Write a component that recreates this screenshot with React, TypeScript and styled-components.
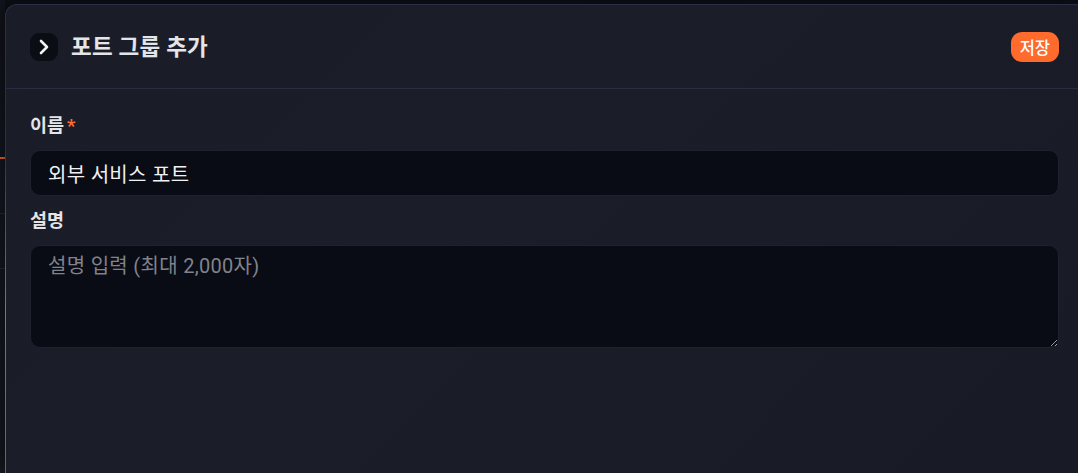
import React from "react";
import styled, { createGlobalStyle } from "styled-components";

const GlobalStyle = createGlobalStyle`
  html, body {
    margin: 0;
    padding: 0;
    background: #0d0f16;
    overflow: hidden;
  }
  body {
    font-family: Roboto, "Noto Sans CJK KR", sans-serif;
  }
`;

const Screen = styled.div`
  display: flex;
  width: 1078px;
  height: 473px;
  overflow: hidden;
`;

// strip of the page that stays visible left of the drawer
const PageEdge = styled.div`
  flex: 0 0 5px;
  background:
    linear-gradient(#13151d, #13151d) 0 0 / 100% 19px no-repeat,
    linear-gradient(#ff6b2c, #ff6b2c) 0 157px / 100% 2px no-repeat,
    linear-gradient(#2a2d38, #2a2d38) 0 213px / 100% 1px no-repeat,
    linear-gradient(#2a2d38, #2a2d38) 0 268px / 100% 1px no-repeat,
    linear-gradient(180deg, #12141c 0%, #161925 40%, #171a22 100%);
`;

const Drawer = styled.aside`
  position: relative;
  flex: 0 0 1078px;
  margin-top: 4px;
  box-sizing: border-box;
  border: 1px solid #2a2e48;
  border-right: none;
  border-bottom: none;
  border-radius: 12px 0 0 0;
  background: linear-gradient(135deg, #1a1d28 0%, #1b1e29 45%, #181b25 100%);
  box-shadow: -6px 0 18px rgba(0, 0, 0, 0.45);

  &::before {
    content: "";
    position: absolute;
    left: -1px;
    top: 140px;
    bottom: 0;
    width: 1px;
    background: linear-gradient(180deg, rgba(255, 107, 44, 0) 0%, rgba(255, 107, 44, 0.75) 50%, rgba(255, 107, 44, 0.55) 100%);
  }
`;

const Header = styled.header`
  display: flex;
  align-items: center;
  justify-content: space-between;
  height: 83px;
  padding: 0 24px;
  border-bottom: 1px solid #282c45;
`;

const TitleGroup = styled.div`
  display: flex;
  align-items: center;
  gap: 13px;
`;

const IconButton = styled.button`
  display: flex;
  align-items: center;
  justify-content: center;
  width: 28px;
  height: 28px;
  padding: 0;
  border: none;
  border-radius: 9px;
  background: #0b0d14;
  color: #f2f2f2;
`;

const Title = styled.h2`
  margin: 0;
  font-size: 22.5px;
  font-weight: 700;
  line-height: 30px;
  letter-spacing: 0.2px;
  color: #e4e5e8;
`;

const SaveButton = styled.button`
  height: 30px;
  padding: 0 9px;
  border: none;
  border-radius: 11px;
  background: #ff6b2c;
  color: #fff;
  font-family: inherit;
  font-size: 16.5px;
  font-weight: 500;
`;

const Body = styled.div`
  display: flex;
  flex-direction: column;
  padding: 24px 24px 0;
`;

const Field = styled.div`
  display: flex;
  flex-direction: column;
  gap: 11px;
  margin-bottom: 12px;
`;

const Label = styled.label`
  font-size: 18.5px;
  font-weight: 700;
  line-height: 26px;
  color: #e4e5e8;
`;

const Required = styled.span`
  margin-left: 3px;
  color: #ff6b2c;
`;

const controlCss = `
  box-sizing: border-box;
  width: 100%;
  border: 1px solid #1e2230;
  border-radius: 10px;
  background: #090c14;
  color: #f0f1f3;
  font-family: Roboto, "Noto Sans CJK KR", sans-serif;
  font-size: 20px;
  letter-spacing: 0.3px;
  padding: 0 17px;
  outline: none;
  &::placeholder {
    color: #80838b;
  }
`;

const TextInput = styled.input`
  ${controlCss}
  height: 46px;
`;

const TextArea = styled.textarea`
  ${controlCss}
  height: 103px;
  padding-top: 6px;
  resize: vertical;
  line-height: 28px;
`;

export default function App() {
  return (
    <>
      <GlobalStyle />
      <Screen>
        <PageEdge />
        <Drawer>
          <Header>
            <TitleGroup>
              <IconButton aria-label="닫기">
                <svg width="24" height="24" viewBox="0 0 24 24" fill="none" stroke="currentColor" strokeWidth="2.6" strokeLinecap="round" strokeLinejoin="round">
                  <path d="m9 18 6-6-6-6" />
                </svg>
              </IconButton>
              <Title>포트 그룹 추가</Title>
            </TitleGroup>
            <SaveButton>저장</SaveButton>
          </Header>
          <Body>
            <Field>
              <Label>
                이름<Required>*</Required>
              </Label>
              <TextInput defaultValue="외부 서비스 포트" />
            </Field>
            <Field>
              <Label>설명</Label>
              <TextArea placeholder="설명 입력 (최대 2,000자)" />
            </Field>
          </Body>
        </Drawer>
      </Screen>
    </>
  );
}
